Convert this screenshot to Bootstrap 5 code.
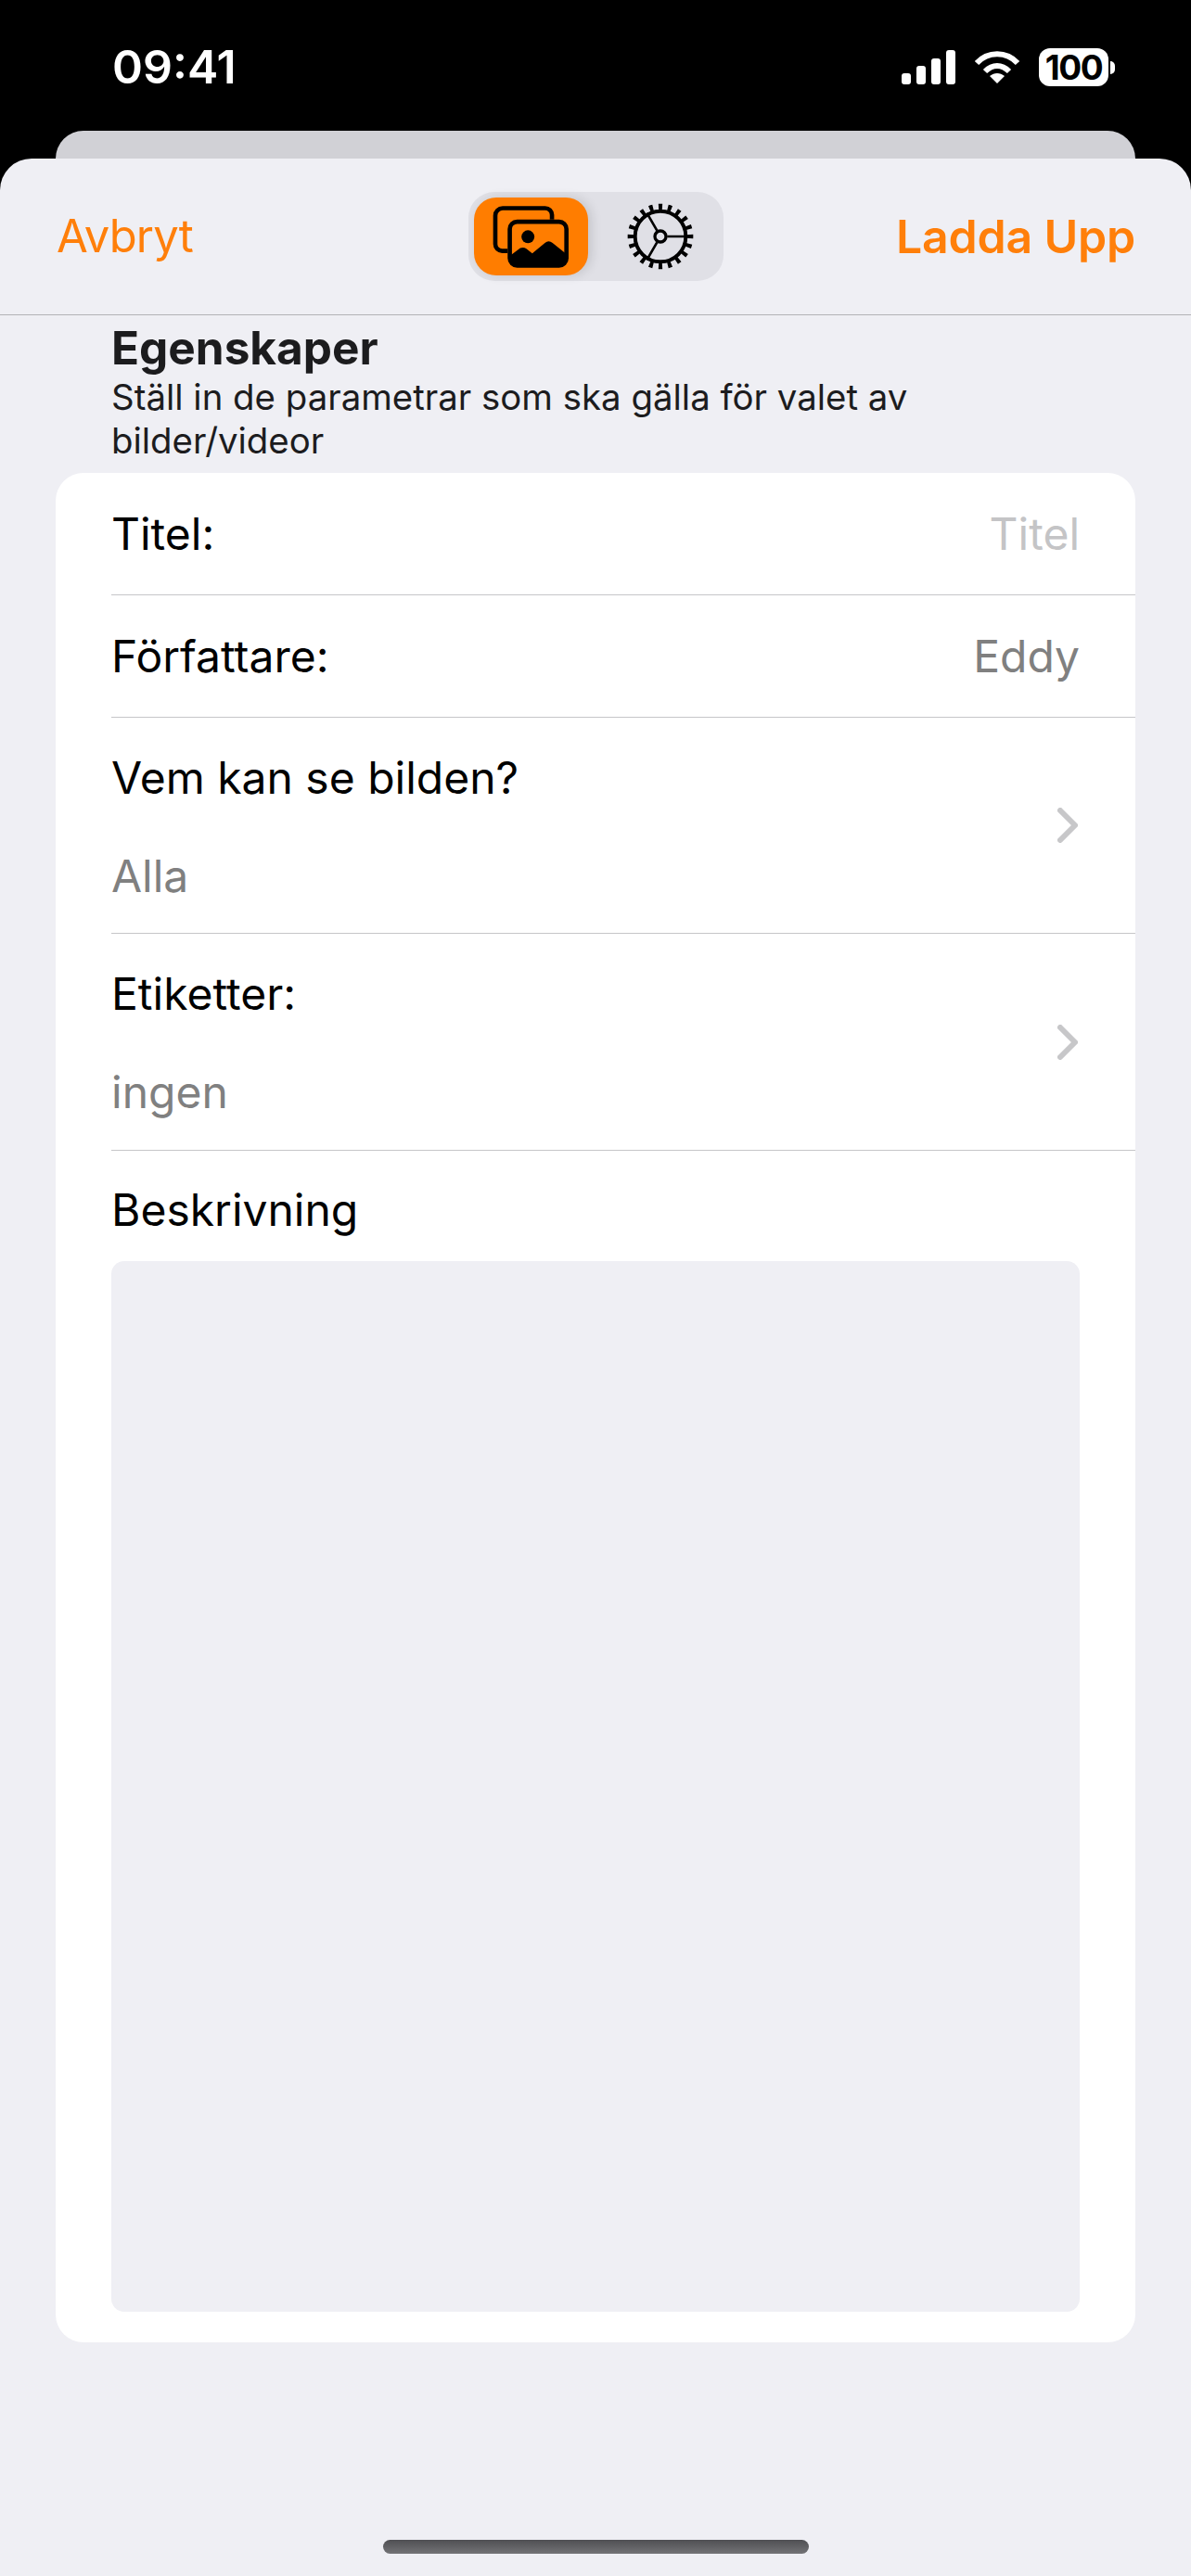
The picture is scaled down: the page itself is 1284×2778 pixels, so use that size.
<!DOCTYPE html>
<html lang="sv">
<head>
  <meta charset="UTF-8" />
  <meta name="viewport" content="width=device-width, initial-scale=1" />
  <title>Egenskaper</title>
  <link href="https://cdn.jsdelivr.net/npm/bootstrap@5.3.0/dist/css/bootstrap.min.css" rel="stylesheet">
  <style>
    body {
      font-family: Inter, "Liberation Sans", sans-serif;
      background: #000;
      color: #000;
      height: 2778px;
      font-size: 48px;
      line-height: 1.2;
    }

    /* Status bar */
    .status-bar { height: 141px; padding: 52px 82px 0 121px; color: #fff; }
    .status-time { font-size: 50px; font-weight: 600; line-height: 40px; }
    .status-icons { gap: 20px; }
    .battery { width: 75px; height: 41px; border-radius: 12px; background: #fff; color: #000; font-size: 37px; font-weight: 700; line-height: 41px; text-align: center; letter-spacing: -1.5px; }
    .battery-tip { width: 5px; height: 14px; background: #fff; border-radius: 0 7px 7px 0; margin-left: -18px; }

    /* Sheets */
    .sheet-behind { height: 30px; margin: 0 60px; background: #d1d1d6; border-radius: 30px 30px 0 0; }
    .sheet { background: #efeff4; border-radius: 34px 34px 0 0; }

    .sheet-nav { height: 169px; padding: 0 60px; border-bottom: 1px solid #b2b2b6; }
    .nav-action { color: #ff7f0a; font-size: 49px; width: 300px; letter-spacing: -.8px; padding-left: 1px; }
    .nav-action.strong { font-size: 50px; font-weight: 600; letter-spacing: -.2px; }

    .segment { width: 275px; height: 96px; padding: 6px; background: #e0e0e6; border-radius: 28px; }
    .segment-on { width: 123px; height: 84px; background: #ff7d00; border-radius: 24px; box-shadow: 4px 0 12px rgba(0,0,0,.12); }
    .segment-off { width: 140px; margin-left: 8px; }

    .section-head { height: 170px; padding: 12px 120px 0; }
    .section-title { font-size: 49.5px; font-weight: 700; line-height: 46px; color: #1c1c1e; margin: 0; }
    .section-sub { font-size: 38.4px; line-height: 47px; color: #1c1c1e; margin: 7px 0 0; }

    .form-card { margin: 0 60px; border: 0; border-radius: 30px; overflow: hidden; }
    .form-row-item { margin-left: 60px; padding: 0 60px 0 0; border-color: #c6c6c8; background: transparent; color: #000; }
    .row-one { height: 132px; }
    .row-two { height: 233px; }
    .row-two.row-tall { height: 234px; }
    .row-label { line-height: 58px; }
    .row-sub { color: #808080; line-height: 58px; margin-top: 48px; }
    .row-two .row-label { padding-top: 36px; }
    .value-hint { color: #c4c4c6; }
    .value-set { color: #808080; }
    .row-chevron { margin-right: 2px; }
    .row-desc { padding: 35px 60px 33px 0; }
    .desc-box { height: 1133px; margin-top: 26px; background: #efeff4; border: 0; border-radius: 14px; resize: none; }

    .home-bar { width: 459px; height: 15px; margin: 213px auto 0; border-radius: 8px; background: linear-gradient(#4f4f53, #737376); }
  </style>
</head>

<body class="d-flex flex-column">

  <!-- Status bar -->
  <div class="status-bar d-flex justify-content-between align-items-start">
    <div class="status-time">09:41</div>
    <div class="status-icons d-flex align-items-center">
      <svg width="58" height="37" viewBox="0 0 58 37" fill="#fff">
        <rect x="0" y="25" width="10" height="12" rx="3"/>
        <rect x="16" y="17" width="10" height="20" rx="3"/>
        <rect x="32" y="9" width="10" height="28" rx="3"/>
        <rect x="48" y="0" width="10" height="37" rx="3"/>
      </svg>
      <svg width="50" height="37" viewBox="0 0 50 37" fill="none" stroke="#fff" stroke-width="6">
        <path d="M3 14C15 1 35 1 47 14"/>
        <path d="M12 23C20 15 30 15 38 23"/>
        <path d="M17 28L25 36L33 28C28 24 22 24 17 28Z" fill="#fff" stroke="none"/>
      </svg>
      <div class="battery">100</div>
      <div class="battery-tip"></div>
    </div>
  </div>

  <div class="sheet-behind"></div>

  <div class="sheet flex-grow-1">

    <!-- Top bar with the two tabs -->
    <div class="sheet-nav d-flex justify-content-between align-items-center">
      <a class="nav-action text-decoration-none">Avbryt</a>
      <div class="segment d-flex align-items-center">
        <div class="segment-on flex-shrink-0 d-flex align-items-center justify-content-center">
          <svg width="82" height="68" viewBox="155 93 247 204">
            <path d="M348 140V125a22 22 0 0 0-22-22H188a24 24 0 0 0-24 24V220a22 22 0 0 0 22 22H204" fill="none" stroke="#000" stroke-width="14"/>
            <rect x="211" y="147" width="184" height="143" rx="24" fill="none" stroke="#000" stroke-width="14"/>
            <circle cx="270" cy="196" r="21"/>
            <path d="M211 258L245 233Q255 228 265 235L284 250L325 216Q337 206 350 216L395 252V268a22 22 0 0 1-22 22H233a22 22 0 0 1-22-22Z"/>
          </svg>
        </div>
        <div class="segment-off flex-shrink-0 d-flex align-items-center justify-content-center">
          <svg width="74" height="74" viewBox="-111 -111 222 222" fill="none" stroke="#000">
            <circle r="96" stroke-width="20" pathLength="200" stroke-dasharray="4 6" stroke-dashoffset="2"/>
            <circle r="82" stroke-width="12"/>
            <circle r="18" stroke-width="10"/>
            <path d="M22 0H82M-11-19L-44-76M-11 19L-44 76" stroke-width="8"/>
          </svg>
        </div>
      </div>
      <a class="nav-action strong text-decoration-none text-end">Ladda Upp</a>
    </div>

    <!-- Section heading -->
    <div class="section-head">
      <h2 class="section-title">Egenskaper</h2>
      <p class="section-sub">Ställ in de parametrar som ska gälla för valet av bilder/videor</p>
    </div>

    <!-- Form -->
    <div class="card form-card">
      <div class="list-group list-group-flush">
        <div class="list-group-item form-row-item row-one d-flex justify-content-between align-items-center">
          <span>Titel:</span><span class="value-hint">Titel</span>
        </div>
        <div class="list-group-item form-row-item row-one d-flex justify-content-between align-items-center">
          <span>Författare:</span><span class="value-set">Eddy</span>
        </div>
        <div class="list-group-item form-row-item row-two d-flex justify-content-between align-items-center">
          <div class="align-self-start">
            <div class="row-label">Vem kan se bilden?</div>
            <div class="row-sub">Alla</div>
          </div>
          <svg class="row-chevron" width="22" height="38" viewBox="0 0 22 38" fill="none" stroke="#c7c7c9" stroke-width="6" stroke-linecap="round" stroke-linejoin="round"><path d="M3 3L19 19L3 35"/></svg>
        </div>
        <div class="list-group-item form-row-item row-two row-tall d-flex justify-content-between align-items-center">
          <div class="align-self-start">
            <div class="row-label">Etiketter:</div>
            <div class="row-sub">ingen</div>
          </div>
          <svg class="row-chevron" width="22" height="38" viewBox="0 0 22 38" fill="none" stroke="#c7c7c9" stroke-width="6" stroke-linecap="round" stroke-linejoin="round"><path d="M3 3L19 19L3 35"/></svg>
        </div>
        <div class="list-group-item form-row-item row-desc">
          <div class="row-label">Beskrivning</div>
          <div class="desc-box"></div>
        </div>
      </div>
    </div>

    <div class="home-bar"></div>
  </div>

  <script src="https://cdn.jsdelivr.net/npm/bootstrap@5.3.0/dist/js/bootstrap.bundle.min.js"></script>
</body>
</html>
